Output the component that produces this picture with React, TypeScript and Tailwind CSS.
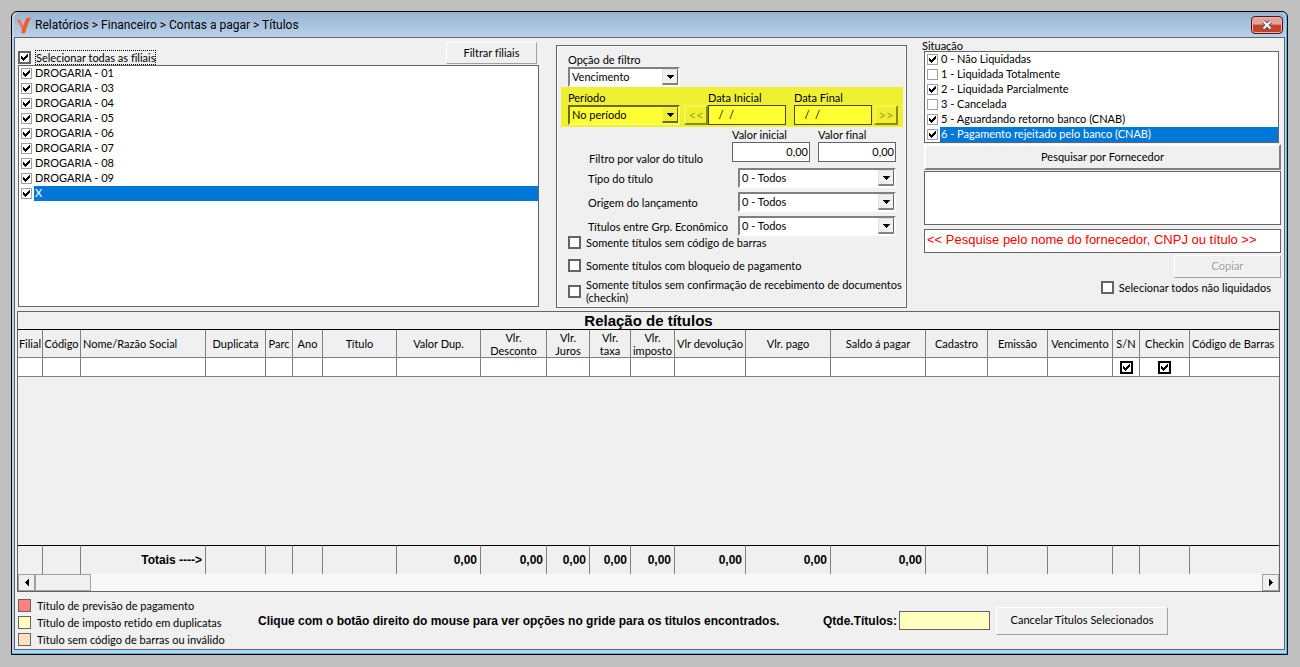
import React from 'react';

type TAlign = 'left' | 'center' | 'right';

interface IFilial {
  nome: string;
  selecionada?: boolean;
}

interface ISituacao {
  nome: string;
  marcada: boolean;
  selecionada?: boolean;
}

interface IColuna {
  titulo: string;
  largura: string;
  align?: TAlign;
  total?: string;
  check?: boolean;
}

const filiais: IFilial[] = [
  { nome: 'DROGARIA - 01' },
  { nome: 'DROGARIA - 03' },
  { nome: 'DROGARIA - 04' },
  { nome: 'DROGARIA - 05' },
  { nome: 'DROGARIA - 06' },
  { nome: 'DROGARIA - 07' },
  { nome: 'DROGARIA - 08' },
  { nome: 'DROGARIA - 09' },
  { nome: 'X', selecionada: true },
];

const situacoes: ISituacao[] = [
  { nome: '0 - Não Liquidadas', marcada: true },
  { nome: '1 - Liquidada Totalmente', marcada: false },
  { nome: '2 - Liquidada Parcialmente', marcada: true },
  { nome: '3 - Cancelada', marcada: false },
  { nome: '5 - Aguardando retorno banco (CNAB)', marcada: true },
  { nome: '6 - Pagamento rejeitado pelo banco (CNAB)', marcada: true, selecionada: true },
];

const colunas: IColuna[] = [
  { titulo: 'Filial', largura: 'w-[25px]' },
  { titulo: 'Código', largura: 'w-[38px]' },
  { titulo: 'Nome/Razão Social', largura: 'w-[125px]', align: 'left', total: 'Totais ---->' },
  { titulo: 'Duplicata', largura: 'w-[60px]' },
  { titulo: 'Parc', largura: 'w-[27px]' },
  { titulo: 'Ano', largura: 'w-[30px]' },
  { titulo: 'Título', largura: 'w-[74px]' },
  { titulo: 'Valor Dup.', largura: 'w-[84px]', total: '0,00' },
  { titulo: 'Vlr.\nDesconto', largura: 'w-[66px]', total: '0,00' },
  { titulo: 'Vlr.\nJuros', largura: 'w-[43px]', total: '0,00' },
  { titulo: 'Vlr.\ntaxa', largura: 'w-[41px]', total: '0,00' },
  { titulo: 'Vlr.\nimposto', largura: 'w-[44px]', total: '0,00' },
  { titulo: 'Vlr devolução', largura: 'w-[71px]', total: '0,00' },
  { titulo: 'Vlr. pago', largura: 'w-[85px]', total: '0,00' },
  { titulo: 'Saldo á pagar', largura: 'w-[95px]', total: '0,00' },
  { titulo: 'Cadastro', largura: 'w-[62px]' },
  { titulo: 'Emissão', largura: 'w-[60px]' },
  { titulo: 'Vencimento', largura: 'w-[65px]' },
  { titulo: 'S/N', largura: 'w-[27px]', check: true },
  { titulo: 'Checkin', largura: 'w-[50px]', check: true },
  { titulo: 'Código de Barras', largura: 'w-[89px]', align: 'left' },
];

const legendas = [
  { cor: 'bg-[#ff8080]', texto: 'Título de previsão de pagamento' },
  { cor: 'bg-[#ffffc0]', texto: 'Título de imposto retido em duplicatas' },
  { cor: 'bg-[#ffe0c0]', texto: 'Título sem código de barras ou inválido' },
];

const checkVariants = {
  lista: 'size-[11px] border border-[#a0a0a0]',
  form: 'size-[13px] border-2 border-[#646464]',
  grade: 'size-[13px] border-2 border-black',
};

interface CheckBoxProps {
  variante: keyof typeof checkVariants;
  checked?: boolean;
  id?: string;
  rotulo?: string;
}

const CheckBox: React.FC<CheckBoxProps> = ({ variante, checked, id, rotulo }) => (
  <span className="relative grid shrink-0 place-items-center">
    <input
      type="checkbox"
      id={id}
      aria-label={rotulo}
      defaultChecked={checked}
      className={['peer appearance-none bg-white', checkVariants[variante]].join(' ')}
    />
    <svg
      viewBox="0 0 7 7"
      className="pointer-events-none absolute size-[7px] opacity-0 peer-checked:opacity-100"
      shapeRendering="crispEdges"
    >
      <path d="M0 2h1v1h1v1h1v-1h1v-1h1v-1h1v-1h1v3h-1v1h-1v1h-1v1h-1v1h-1v-1h-1v-1h-1z" />
    </svg>
  </span>
);

interface ComboProps {
  id: string;
  valor: string;
  largura: string;
  destaque?: boolean;
}

const Combo: React.FC<ComboProps> = ({ id, valor, largura, destaque }) => (
  <span className={['relative block h-5', largura].join(' ')}>
    <select
      id={id}
      className={[
        'block h-full w-full appearance-none border-2 pl-[2px] outline-none',
        destaque
          ? 'border-t-[#6b6b16] border-l-[#6b6b16] border-r-[#ffff60] border-b-[#ffff60] bg-[#ffff33]'
          : 'border-t-[#808080] border-l-[#808080] border-r-white border-b-white bg-white',
      ].join(' ')}
    >
      <option>{valor}</option>
    </select>
    <span
      className={[
        'pointer-events-none absolute top-[2px] right-[2px] bottom-[2px] grid w-4 place-items-center border border-b-2',
        destaque
          ? 'border-[#f4f450] border-r-[#6b6b16] border-b-[#6b6b16] bg-[#f0f033]'
          : 'border-[#e3e3e3] border-r-[#646464] border-b-[#808080] bg-[#f0f0f0]',
      ].join(' ')}
    >
      <svg viewBox="0 0 7 4" className="h-1 w-[7px]" shapeRendering="crispEdges">
        <path d="M0 0h7v1h-1v1h-1v1h-1v1h-1v-1h-1v-1h-1v-1h-1z" />
      </svg>
    </span>
  </span>
);

const botao = 'border border-white border-r-[#a0a0a0] border-b-[#a0a0a0] bg-[#f0f0f0]';
const botaoPeriodo =
  'border-2 border-t-[#f6f650] border-l-[#f6f650] border-r-[#8a8a20] border-b-[#8a8a20] bg-[#f0f033] text-[#a0a020] text-[13px] leading-none';
const negrito = "font-['Liberation_Sans',Arial,sans-serif] font-bold";

const TitleBar: React.FC = () => (
  <header className="flex h-[25px] items-center justify-between rounded-t-md bg-gradient-to-b from-[#98b4d2] to-[#b9d1ea] pt-px pr-[2px] pl-[2px]">
    <div className="flex items-center gap-[3px]">
      <svg viewBox="0 0 16 17" className="h-[17px] w-4">
        <path d="M0.500 2.500L4 2.200Q6 6 7.500 10L6.500 15.500Q4.500 8 0.500 2.500Z" fill="#f0794f" />
        <path d="M5.500 16Q5.500 13 7 9.500Q8.500 5 10.500 1L15.500 0.500Q11.500 6 9.500 15.500Q7.500 17 5.500 16Z" fill="#f15a29" />
      </svg>
      <h1 className="font-[Roboto,sans-serif] text-[12px] leading-4">
        Relatórios &gt; Financeiro &gt; Contas a pagar &gt; Títulos
      </h1>
    </div>
    <button
      type="button"
      aria-label="Fechar"
      className="grid h-[18px] w-8 place-items-center rounded-sm border border-[#4a1420] bg-gradient-to-b from-[#e8a196] from-45% to-[#c0432a] to-50% shadow-[inset_0_0_0_1px_#e9b5ac]"
    >
      <svg viewBox="0 0 12 10" className="h-[10px] w-3">
        <path d="M2.500 1.500L9.500 8.500M9.500 1.500L2.500 8.500" stroke="#4c5468" strokeWidth="4" />
        <path d="M2.500 1.500L9.500 8.500M9.500 1.500L2.500 8.500" stroke="#f4f4f4" strokeWidth="2.200" />
      </svg>
    </button>
  </header>
);

const FiliaisPanel: React.FC = () => (
  <section className="ml-px min-w-0 flex-1">
    <div className="flex h-[27px] items-end justify-between pr-[2px]">
      <div className="flex items-center gap-1">
        <CheckBox variante="form" id="todas" checked />
        <label htmlFor="todas" className="border border-dotted border-black leading-[13px]">
          Selecionar todas as filiais
        </label>
      </div>
      <button type="button" className={['mb-px h-[22px] w-[91px]', botao].join(' ')}>
        Filtrar filiais
      </button>
    </div>
    <ul className="h-[242px] border border-[#646464] bg-white">
      {filiais.map((f, i) => (
        <li key={f.nome} className="flex h-[15px] items-center gap-[2px] pl-[2px]">
          <CheckBox variante="lista" id={`filial-${i}`} checked />
          <label
            htmlFor={`filial-${i}`}
            className={['flex-1 pb-px pl-px leading-[14px]', f.selecionada ? 'bg-[#0078d7] text-white' : ''].join(' ')}
          >
            {f.nome}
          </label>
        </li>
      ))}
    </ul>
  </section>
);

const filtrosTitulo = [
  { id: 'tipo', texto: 'Tipo do título' },
  { id: 'origem', texto: 'Origem do lançamento' },
  { id: 'grupo', texto: 'Títulos entre Grp. Econômico' },
];

const FiltroPanel: React.FC = () => (
  <section className="mt-[7px] ml-[17px] h-[263px] w-[351px] shrink-0 border border-[#646464] shadow-[inset_1px_1px_0_white,inset_-1px_-1px_0_white]">
    <div className="px-[11px] pt-[7px]">
      <label htmlFor="opcao" className="block leading-[14px]">Opção de filtro</label>
      <Combo id="opcao" valor="Vencimento" largura="w-28" />
    </div>
    <div className="mr-[3px] ml-1 flex h-10 items-end bg-[#f0f033] pb-[2px] pl-[7px]">
      <div>
        <label htmlFor="periodo" className="block leading-[14px]">Período</label>
        <Combo id="periodo" valor="No período" largura="w-28" destaque />
      </div>
      <button type="button" aria-label="Período anterior" className={['ml-1 h-5 w-6', botaoPeriodo].join(' ')}>
        &lt;&lt;
      </button>
      <div>
        <label htmlFor="data-inicial" className="block leading-[14px]">Data Inicial</label>
        <input id="data-inicial" defaultValue="   /  /" className="block h-5 w-[78px] border border-[#4b4b10] bg-[#ffff33] px-px pb-[2px] whitespace-pre outline-none" />
      </div>
      <div className="ml-2">
        <label htmlFor="data-final" className="block leading-[14px]">Data Final</label>
        <input id="data-final" defaultValue="   /  /" className="block h-5 w-[78px] border border-[#4b4b10] bg-[#ffff33] px-px pb-[2px] whitespace-pre outline-none" />
      </div>
      <button type="button" aria-label="Próximo período" className={['ml-[2px] h-5 w-6', botaoPeriodo].join(' ')}>
        &gt;&gt;
      </button>
    </div>
    <div className="flex items-end justify-between pt-px pr-[10px] pl-8">
      <span className="-mb-1 leading-[14px]">Filtro por valor do título</span>
      <div className="flex gap-2">
        <div>
          <label htmlFor="valor-inicial" className="block leading-[14px]">Valor inicial</label>
          <input id="valor-inicial" defaultValue="0,00" className="block h-5 w-[78px] border border-[#646464] bg-white pr-px pb-[2px] text-right outline-none" />
        </div>
        <div>
          <label htmlFor="valor-final" className="block leading-[14px]">Valor final</label>
          <input id="valor-final" defaultValue="0,00" className="block h-5 w-[78px] border border-[#646464] bg-white pr-px pb-[2px] text-right outline-none" />
        </div>
      </div>
    </div>
    <div className="mt-[6px] flex flex-col gap-1 pr-[10px] pl-[31px]">
      {filtrosTitulo.map((f) => (
        <div key={f.id} className="flex items-center justify-between">
          <label htmlFor={f.id} className="pt-[2px]">{f.texto}</label>
          <Combo id={f.id} valor="0 - Todos" largura="w-[158px]" />
        </div>
      ))}
    </div>
    <div className="flex flex-col gap-[10px] pl-[11px] leading-[13px]">
      <div className="flex items-center gap-[5px]">
        <CheckBox variante="form" id="sem-barras" />
        <label htmlFor="sem-barras">Somente títulos sem código de barras</label>
      </div>
      <div className="flex items-center gap-[5px]">
        <CheckBox variante="form" id="bloqueio" />
        <label htmlFor="bloqueio">Somente títulos com bloqueio de pagamento</label>
      </div>
      <div className="-mt-1 flex items-center gap-[5px]">
        <CheckBox variante="form" id="sem-confirmacao" />
        <label htmlFor="sem-confirmacao" className="whitespace-nowrap">
          Somente títulos sem confirmação de recebimento de documentos
          <br />
          (checkin)
        </label>
      </div>
    </div>
  </section>
);

const SituacaoPanel: React.FC = () => (
  <section className="-mr-px ml-[15px] w-[359px] shrink-0 pt-[2px]">
    <h2 className="leading-[11px]">Situação</h2>
    <div className="flex flex-col pl-[2px]">
      <ul className="mr-[2px] border border-[#646464] bg-white">
        {situacoes.map((s, i) => (
          <li key={s.nome} className="flex h-[15px] items-center gap-[2px] pl-[2px]">
            <CheckBox variante="lista" id={`situacao-${i}`} checked={s.marcada} />
            <label
              htmlFor={`situacao-${i}`}
              className={['flex-1 pb-px pl-px leading-[14px]', s.selecionada ? 'bg-[#0078d7] text-white' : ''].join(' ')}
            >
              {s.nome}
            </label>
          </li>
        ))}
      </ul>
      <button
        type="button"
        className="mt-px h-[26px] border-2 border-t-white border-r-[#808080] border-b-[#808080] border-l-white bg-[#f0f0f0]"
      >
        Pesquisar por Fornecedor
      </button>
      <div className="mt-px h-[54px] border border-[#646464] bg-white" />
      <input
        aria-label="Fornecedor"
        defaultValue="<< Pesquise pelo nome do fornecedor, CNPJ ou título >>"
        className="mt-1 h-6 border border-[#646464] bg-white px-[2px] pb-1 font-['Liberation_Sans',Arial,sans-serif] text-[13px] text-[#ff0000] outline-none"
      />
      <button
        type="button"
        disabled
        className={['mt-[2px] h-[23px] w-[107px] self-end text-[#a0a0a0] [text-shadow:1px_1px_0_white]', botao].join(' ')}
      >
        Copiar
      </button>
      <div className="mt-[3px] flex items-center gap-[5px] self-end pr-[10px] leading-[13px]">
        <CheckBox variante="form" id="nao-liquidados" />
        <label htmlFor="nao-liquidados">Selecionar todos não liquidados</label>
      </div>
    </div>
  </section>
);

const Grade: React.FC = () => (
  <section className="flex flex-1 flex-col border border-[#646464]">
    <h2 className={['border-b border-black text-center text-[15px] leading-[17px]', negrito].join(' ')}>
      Relação de títulos
    </h2>
    <table className="w-full table-fixed border-separate border-spacing-0">
      <colgroup>
        {colunas.map((c) => (
          <col key={c.titulo} className={c.largura} />
        ))}
      </colgroup>
      <thead>
        <tr className="h-7">
          {colunas.map((c) => (
            <th
              key={c.titulo}
              className={[
                'border-r border-b border-[#808080] p-0 leading-[13px] font-normal whitespace-pre last:border-r-0',
                c.align === 'left' ? 'pl-[2px] text-left' : 'text-center',
              ].join(' ')}
            >
              {c.titulo}
            </th>
          ))}
        </tr>
      </thead>
      <tbody>
        <tr className="h-[19px] bg-white">
          {colunas.map((c) => (
            <td key={c.titulo} className="border-r border-b border-[#808080] p-0 last:border-r-0">
              {c.check && (
                <div className="flex justify-center">
                  <CheckBox variante="grade" rotulo={c.titulo} checked />
                </div>
              )}
            </td>
          ))}
        </tr>
        <tr className="h-[168px]">
          <td colSpan={colunas.length} className="p-0" />
        </tr>
      </tbody>
      <tfoot>
        <tr className="h-[29px]">
          {colunas.map((c) => (
            <td
              key={c.titulo}
              className={[
                'border-t border-r border-t-black border-r-[#808080] p-0 pr-[3px] text-right text-[12px] leading-4 whitespace-nowrap last:border-r-0',
                negrito,
              ].join(' ')}
            >
              {c.total}
            </td>
          ))}
        </tr>
      </tfoot>
    </table>
    <div className="mt-auto flex h-[17px] justify-between bg-[#f8f8f8]">
      <div className="flex">
        <button type="button" aria-label="Rolar para a esquerda" className="grid w-[17px] place-items-center border border-[#a0a0a0] bg-[#f0f0f0]">
          <svg viewBox="0 0 4 7" className="h-[7px] w-1" shapeRendering="crispEdges">
            <path d="M4 0v7h-1v-1h-1v-1h-1v-1h-1v-1h1v-1h1v-1h1v-1z" />
          </svg>
        </button>
        <div className="w-14 border border-[#a0a0a0] bg-[#f0f0f0]" />
      </div>
      <button type="button" aria-label="Rolar para a direita" className="grid w-[17px] place-items-center border border-[#a0a0a0] bg-[#f0f0f0]">
        <svg viewBox="0 0 4 7" className="h-[7px] w-1" shapeRendering="crispEdges">
          <path d="M0 0v7h1v-1h1v-1h1v-1h1v-1h-1v-1h-1v-1h-1v-1z" />
        </svg>
      </button>
    </div>
  </section>
);

const Rodape: React.FC = () => (
  <footer className="flex h-[57px] items-center pl-px">
    <ul className="mt-1 flex w-60 flex-col gap-1">
      {legendas.map((l) => (
        <li key={l.texto} className="flex items-center gap-[6px] leading-[13px]">
          <span className={['size-[13px] border border-[#646464]', l.cor].join(' ')} />
          {l.texto}
        </li>
      ))}
    </ul>
    <p className={['text-[12px]', negrito].join(' ')}>
      Clique com o botão direito do mouse para ver opções no gride para os titulos encontrados.
    </p>
    <div className="mr-28 ml-auto flex items-center">
      <label htmlFor="qtde" className={['text-[12px]', negrito].join(' ')}>Qtde.Títulos:</label>
      <input id="qtde" readOnly className="ml-[2px] h-[19px] w-[91px] border border-[#646464] bg-[#ffffc0]" />
      <button type="button" className={['ml-[6px] h-7 w-[172px]', botao].join(' ')}>
        Cancelar Titulos Selecionados
      </button>
    </div>
  </footer>
);

const App: React.FC = () => (
  <div className="flex min-h-screen bg-[#c0c0c0] pt-[11px] pr-3 pb-3 pl-[11px] font-[Lato,'Liberation_Sans',sans-serif] text-[11px] text-black [font-variant-ligatures:none]">
    <div className="flex flex-1 flex-col rounded-t-md border border-black bg-[#b9d1ea] px-[2px] pb-1 shadow-[inset_-1px_-1px_0_#35c5f0]">
      <TitleBar />
      <main className="flex flex-1 flex-col border border-[#646464] bg-[#f0f0f0] pr-1 pl-[2px]">
        <div className="mb-[3px] flex items-start">
          <FiliaisPanel />
          <FiltroPanel />
          <SituacaoPanel />
        </div>
        <Grade />
        <Rodape />
      </main>
    </div>
  </div>
);

export default App;
